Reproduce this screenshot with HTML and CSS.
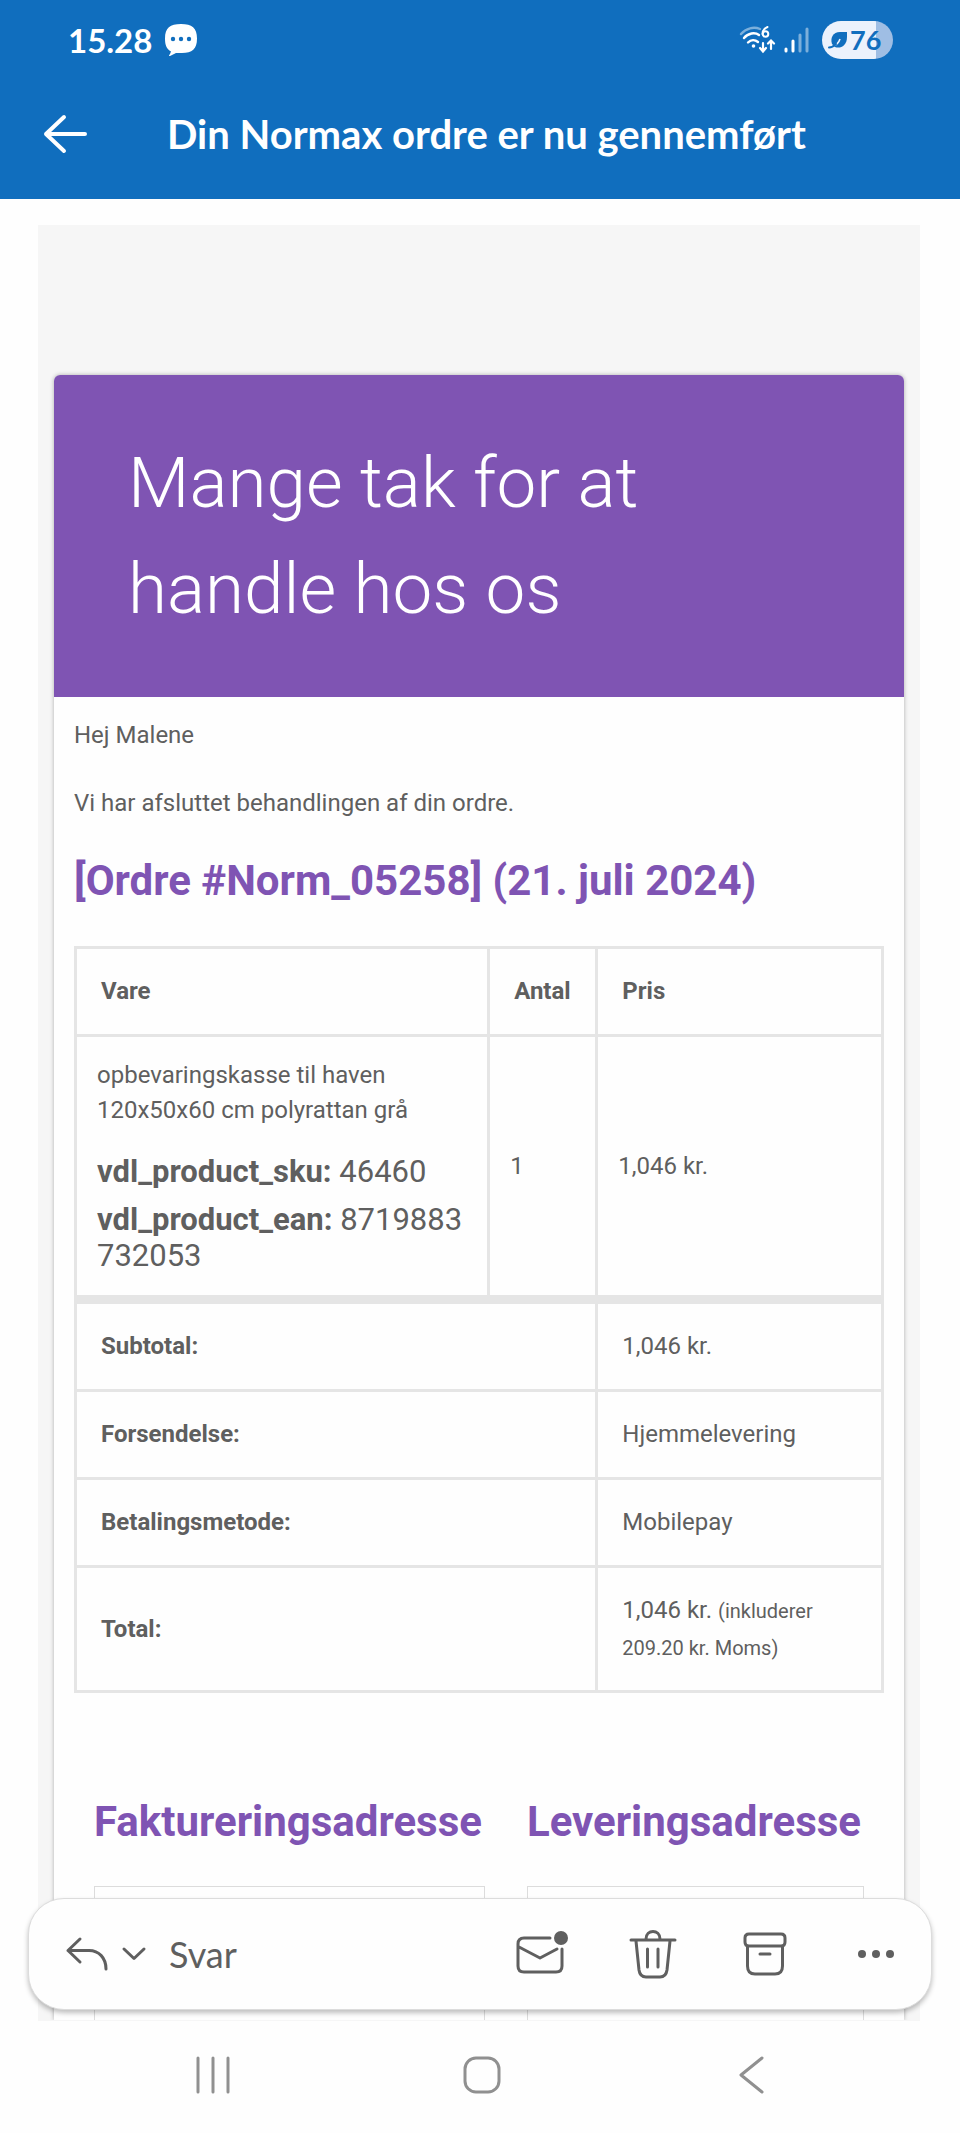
FILE: index.html
```
<!DOCTYPE html>
<html lang="da">
<head>
  <meta charset="UTF-8">
  <meta name="viewport" content="width=device-width, initial-scale=1.0">
  <title>Din Normax ordre er nu gennemført</title>
  <link rel="stylesheet" href="styles.css">
</head>
<body>

  <header class="app-header">
    <div class="status-bar">
      <span class="clock">15.28</span>
      <svg class="bubble" width="34" height="34" viewBox="0 0 34 34">
        <path fill="#fff" d="M17 1C28 1 33 5 33 15.500C33 26 28 30 18 30H12L6 33C4.500 33.500 5 32 6 31L7 28.500C2.500 26 1 22 1 15.500C1 5 6 1 17 1Z"/>
        <circle cx="9" cy="16" r="2.200"/><circle cx="17" cy="16" r="2.200"/><circle cx="25" cy="16" r="2.200"/>
      </svg>
      <svg class="wifi" width="37" height="30" viewBox="0 0 37 30">
        <g fill="none" stroke="#fff" stroke-linecap="round" stroke-width="2.400">
          <path opacity=".45" d="M2 9C7 3 15 1.500 21 4"/>
          <path d="M5 13C9 8 16 7 20 10M9 17.500C12 14.500 16 14.500 19 17"/>
          <path d="M24 18V26M21 23L24 26.500L27 23M32 24V16M29 18.500L32 15.500L35 18.500" stroke-width="2.200"/>
          <path d="M28.500 2C25 3.500 23.500 6 23.500 9" stroke-width="2"/>
          <circle cx="26.500" cy="9" r="2.800" stroke-width="2"/>
        </g>
        <circle cx="14.500" cy="21" r="1.800" fill="#fff"/>
      </svg>
      <svg class="signal" width="26" height="28" viewBox="0 0 26 28">
        <g stroke="#fff" stroke-width="3" stroke-linecap="round">
          <path d="M2 23V25M9 15V25"/>
          <path opacity=".45" d="M16 9V25M23 3V25"/>
        </g>
      </svg>
      <span class="battery">
        <svg width="20" height="18" viewBox="0 0 20 18">
          <path fill="#106ebe" d="M4 13C2 7 5 1 12 1H19V6C19 15 12 18 7 16Z"/>
          <path fill="none" stroke="#ecf2fc" stroke-width="1.600" d="M5 15C9 14 11 11 12 8"/>
          <path fill="none" stroke="#106ebe" stroke-width="2" stroke-linecap="round" d="M1 16.500C4 16.500 6 15 8 13"/>
        </svg>
        <span>76</span>
      </span>
    </div>
    <div class="title-bar">
      <button class="icon-btn" aria-label="Tilbage">
        <svg width="44" height="40" viewBox="0 0 44 40"><path d="M21 3L3 20L21 37M3 20H42"/></svg>
      </button>
      <h1>Din Normax ordre er nu gennemført</h1>
    </div>
  </header>

  <main class="mail">
    <div class="wrapper">
      <article class="card">
        <div class="banner">
          <p>Mange tak for at handle hos os</p>
        </div>
        <div class="content">
          <p>Hej Malene</p>
          <p>Vi har afsluttet behandlingen af din ordre.</p>
          <h2>[Ordre #Norm_05258] (21. juli 2024)</h2>

          <table class="order">
            <colgroup>
              <col class="col-item">
              <col class="col-qty">
              <col>
            </colgroup>
            <thead>
              <tr>
                <th scope="col">Vare</th>
                <th scope="col">Antal</th>
                <th scope="col">Pris</th>
              </tr>
            </thead>
            <tbody>
              <tr>
                <td>
                  opbevaringskasse til haven 120x50x60 cm polyrattan grå
                  <ul class="meta">
                    <li><strong>vdl_product_sku:</strong> 46460</li>
                    <li><strong>vdl_product_ean:</strong> 8719883732053</li>
                  </ul>
                </td>
                <td>1</td>
                <td>1,046 kr.</td>
              </tr>
            </tbody>
            <tfoot>
              <tr>
                <th scope="row" colspan="2">Subtotal:</th>
                <td>1,046 kr.</td>
              </tr>
              <tr>
                <th scope="row" colspan="2">Forsendelse:</th>
                <td>Hjemmelevering</td>
              </tr>
              <tr>
                <th scope="row" colspan="2">Betalingsmetode:</th>
                <td>Mobilepay</td>
              </tr>
              <tr>
                <th scope="row" colspan="2">Total:</th>
                <td>1,046 kr. <small>(inkluderer 209.20 kr. Moms)</small></td>
              </tr>
            </tfoot>
          </table>

          <div class="addresses">
            <section>
              <h2>Faktureringsadresse</h2>
              <div class="address"></div>
            </section>
            <section>
              <h2>Leveringsadresse</h2>
              <div class="address"></div>
            </section>
          </div>
        </div>
      </article>
    </div>

    <div class="reply-bar">
      <button class="icon-btn reply">
        <svg width="44" height="36" viewBox="0 0 44 36"><path d="M15 3L3 14.500L15 26M3 14.500H24C34 14.500 41 22 41 33"/></svg>
        <svg width="26" height="16" viewBox="0 0 26 16"><path d="M3 3L13 12.500L23 3"/></svg>
        <span>Svar</span>
      </button>
      <button class="icon-btn action" aria-label="Markér som ulæst">
        <svg width="54" height="50" viewBox="0 0 54 50">
          <path d="M35 9H9Q3 9 3 15V37Q3 43 9 43H41Q47 43 47 37V20M4 18L25 29L42 20"/>
          <circle class="solid" cx="46" cy="9" r="7"/>
        </svg>
      </button>
      <button class="icon-btn action" aria-label="Slet">
        <svg width="48" height="50" viewBox="0 0 48 50">
          <path d="M2 11H46M17 10C17 0 31 0 31 10M7 12L10 41Q11 48 17 48H31Q37 48 38 41L41 12M18.500 20V38M29 20V38"/>
        </svg>
      </button>
      <button class="icon-btn action" aria-label="Arkivér">
        <svg width="44" height="44" viewBox="0 0 44 44">
          <path d="M6 2H38Q42 2 42 6V10Q42 14 38 14H6Q2 14 2 10V6Q2 2 6 2ZM4.500 14V34Q4.500 42 12 42H32Q39.500 42 39.500 34V14M17 22H27"/>
        </svg>
      </button>
      <button class="icon-btn action" aria-label="Mere">
        <svg width="38" height="12" viewBox="0 0 38 12">
          <circle class="solid" cx="5" cy="6" r="4"/><circle class="solid" cx="19" cy="6" r="4"/><circle class="solid" cx="33" cy="6" r="4"/>
        </svg>
      </button>
    </div>
  </main>

  <nav class="nav-bar">
    <button class="icon-btn" aria-label="Seneste">
      <svg width="38" height="40" viewBox="0 0 38 40"><path d="M4 3V37M19 3V37M34 3V37"/></svg>
    </button>
    <button class="icon-btn" aria-label="Hjem">
      <svg width="40" height="40" viewBox="0 0 40 40"><rect x="3" y="3" width="34" height="34" rx="11"/></svg>
    </button>
    <button class="icon-btn" aria-label="Tilbage">
      <svg width="40" height="40" viewBox="0 0 40 40"><path d="M30 3L9 20L30 37"/></svg>
    </button>
  </nav>

</body>
</html>
```
FILE: styles.css
```
* {
  box-sizing: border-box;
}

body {
  margin: 0;
  min-height: 100vh;
  display: flex;
  flex-direction: column;
  background-color: #fefefe;
  color: #5f5f5f;
  font-family: Roboto, sans-serif;
  font-size: 24px;
  line-height: 36px;
}

p,
h1,
h2 {
  margin: 0;
}

.icon-btn {
  display: flex;
  align-items: center;
  padding: 0;
  border: none;
  background: none;
  color: inherit;
  font: inherit;
  cursor: pointer;
}

.icon-btn svg {
  fill: none;
  stroke: currentColor;
  stroke-width: 3;
  stroke-linecap: round;
  stroke-linejoin: round;
}

.icon-btn .solid {
  fill: currentColor;
  stroke: none;
}

/* header */

.app-header {
  background-color: #106ebe;
  color: #fff;
  font-family: Lato, sans-serif;
  font-weight: 700;
}

.status-bar {
  display: flex;
  align-items: center;
  height: 80px;
  padding: 0 67px 0 68px;
}

.clock {
  font-size: 33px;
}

.bubble {
  margin-left: 12px;
  fill: #106ebe;
}

.wifi {
  margin-left: auto;
}

.signal {
  margin: 0 12px 0 8px;
}

.battery {
  display: flex;
  align-items: center;
  width: 71px;
  height: 38px;
  padding-left: 6px;
  gap: 2px;
  border-radius: 19px;
  background: linear-gradient(to right, #ecf2fc 76%, #9fbee4 76%);
  color: #106ebe;
  font-size: 27px;
}

.title-bar {
  display: flex;
  align-items: center;
  gap: 80px;
  height: 119px;
  padding: 0 43px 12px;
}

.title-bar .icon-btn svg {
  stroke-width: 4;
}

h1 {
  font-size: 40px;
  line-height: 48px;
}

/* mail */

.mail {
  position: relative;
  flex: 1;
  display: flex;
  padding: 26px 40px 0 38px;
}

.wrapper {
  flex: 1;
  padding: 150px 16px 0;
  background-color: #f6f6f6;
}

.card {
  border-radius: 6px 6px 0 0;
  background-color: #fefefe;
  box-shadow: 0 0 4px rgba(0, 0, 0, 0.3);
  clip-path: inset(-6px -6px 0 -6px);
}

.banner {
  padding: 55px 74px;
  border-radius: 6px 6px 0 0;
  background-color: #7f54b3;
  color: #fff;
  font-size: 71px;
  font-weight: 300;
  line-height: 106px;
}

.content {
  padding: 20px 20px 0;
}

.content p {
  margin-bottom: 32px;
}

h2 {
  color: #7f54b3;
  font-size: 42px;
  line-height: 55px;
  margin-bottom: 38px;
}

.order {
  width: 100%;
  border-collapse: collapse;
  table-layout: fixed;
}

.col-item {
  width: 51.2%;
}

.col-qty {
  width: 13.4%;
}

.order th,
.order td {
  border: 3px solid #e5e5e5;
  padding: 24px;
  line-height: 37px;
  text-align: left;
}

.order tbody td {
  padding: 21px 20px;
  line-height: 35px;
}

.order tfoot tr:first-child > * {
  border-top-width: 9px;
}

.order small {
  font-size: 20px;
  line-height: 24px;
}

.order .meta {
  margin: 26px 0 0;
  padding: 0;
  list-style: none;
  font-size: 31px;
  line-height: 36px;
  word-break: break-all;
}

.meta li + li {
  margin-top: 12px;
}

.addresses {
  display: flex;
  gap: 42px;
  padding: 101px 20px 0;
}

.addresses section {
  flex-grow: 1;
}

.addresses h2 {
  margin-bottom: 37px;
}

.address {
  height: 134px;
  border: 1px solid #dcdcdc;
  border-bottom: none;
}

/* floating toolbar over the end of the mail */

.reply-bar {
  position: absolute;
  left: 28px;
  right: 28px;
  bottom: 11px;
  display: flex;
  align-items: center;
  gap: 60px;
  height: 112px;
  padding: 0 20px 0 36px;
  border: 1px solid #dcdcdc;
  border-radius: 36px;
  background-color: #fefefe;
  box-shadow: 0 3px 5px rgba(0, 0, 0, 0.25);
}

.reply {
  gap: 12px;
  margin-right: auto;
  font-family: Lato, sans-serif;
  font-size: 36px;
}

.reply span {
  margin-left: 10px;
}

.action {
  width: 54px;
}

.nav-bar {
  display: flex;
  justify-content: space-between;
  height: 112px;
  padding: 0 188px 4px 194px;
  color: #909090;
}
```
